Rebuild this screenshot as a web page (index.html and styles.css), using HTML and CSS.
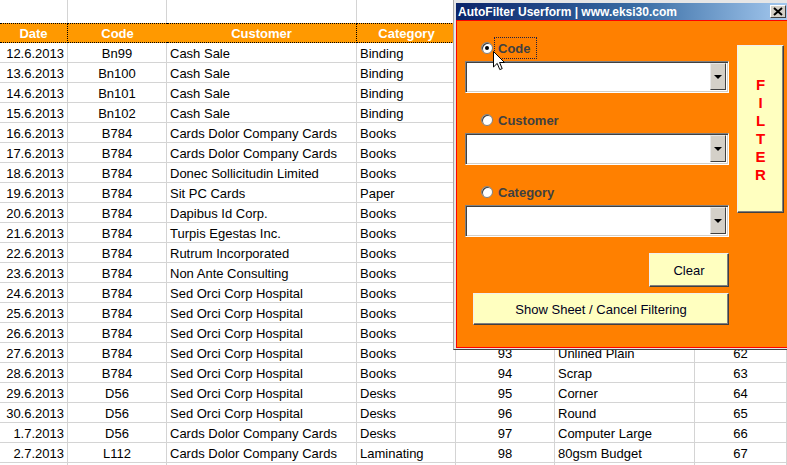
FILE: index.html
```html
<!DOCTYPE html>
<html>
<head>
<meta charset="utf-8">
<link rel="stylesheet" href="styles.css">
</head>
<body>
<div class="sheet">
  <div class="c top"></div><div class="c top"></div><div class="c top"></div><div class="c top"></div><div class="c top"></div><div class="c top"></div><div class="c top"></div>
  <div class="c h ants">Date</div><div class="c h">Code</div><div class="c h ants">Customer</div><div class="c h">Category</div><div class="c h"></div><div class="c h"></div><div class="c h"></div>

  <div class="c r">12.6.2013</div><div class="c m">Bn99</div><div class="c">Cash Sale</div><div class="c">Binding</div><div class="c"></div><div class="c"></div><div class="c"></div>
  <div class="c r">13.6.2013</div><div class="c m">Bn100</div><div class="c">Cash Sale</div><div class="c">Binding</div><div class="c"></div><div class="c"></div><div class="c"></div>
  <div class="c r">14.6.2013</div><div class="c m">Bn101</div><div class="c">Cash Sale</div><div class="c">Binding</div><div class="c"></div><div class="c"></div><div class="c"></div>
  <div class="c r">15.6.2013</div><div class="c m">Bn102</div><div class="c">Cash Sale</div><div class="c">Binding</div><div class="c"></div><div class="c"></div><div class="c"></div>
  <div class="c r">16.6.2013</div><div class="c m">B784</div><div class="c">Cards Dolor Company Cards</div><div class="c">Books</div><div class="c"></div><div class="c"></div><div class="c"></div>
  <div class="c r">17.6.2013</div><div class="c m">B784</div><div class="c">Cards Dolor Company Cards</div><div class="c">Books</div><div class="c"></div><div class="c"></div><div class="c"></div>
  <div class="c r">18.6.2013</div><div class="c m">B784</div><div class="c">Donec Sollicitudin Limited</div><div class="c">Books</div><div class="c"></div><div class="c"></div><div class="c"></div>
  <div class="c r">19.6.2013</div><div class="c m">B784</div><div class="c">Sit PC Cards</div><div class="c">Paper</div><div class="c"></div><div class="c"></div><div class="c"></div>
  <div class="c r">20.6.2013</div><div class="c m">B784</div><div class="c">Dapibus Id Corp.</div><div class="c">Books</div><div class="c"></div><div class="c"></div><div class="c"></div>
  <div class="c r">21.6.2013</div><div class="c m">B784</div><div class="c">Turpis Egestas Inc.</div><div class="c">Books</div><div class="c"></div><div class="c"></div><div class="c"></div>
  <div class="c r">22.6.2013</div><div class="c m">B784</div><div class="c">Rutrum Incorporated</div><div class="c">Books</div><div class="c"></div><div class="c"></div><div class="c"></div>
  <div class="c r">23.6.2013</div><div class="c m">B784</div><div class="c">Non Ante Consulting</div><div class="c">Books</div><div class="c"></div><div class="c"></div><div class="c"></div>
  <div class="c r">24.6.2013</div><div class="c m">B784</div><div class="c">Sed Orci Corp Hospital</div><div class="c">Books</div><div class="c"></div><div class="c"></div><div class="c"></div>
  <div class="c r">25.6.2013</div><div class="c m">B784</div><div class="c">Sed Orci Corp Hospital</div><div class="c">Books</div><div class="c"></div><div class="c"></div><div class="c"></div>
  <div class="c r">26.6.2013</div><div class="c m">B784</div><div class="c">Sed Orci Corp Hospital</div><div class="c">Books</div><div class="c"></div><div class="c"></div><div class="c"></div>
  <div class="c r">27.6.2013</div><div class="c m">B784</div><div class="c">Sed Orci Corp Hospital</div><div class="c">Books</div><div class="c m">93</div><div class="c">Unlined Plain</div><div class="c m">62</div>
  <div class="c r">28.6.2013</div><div class="c m">B784</div><div class="c">Sed Orci Corp Hospital</div><div class="c">Books</div><div class="c m">94</div><div class="c">Scrap</div><div class="c m">63</div>
  <div class="c r">29.6.2013</div><div class="c m">D56</div><div class="c">Sed Orci Corp Hospital</div><div class="c">Desks</div><div class="c m">95</div><div class="c">Corner</div><div class="c m">64</div>
  <div class="c r">30.6.2013</div><div class="c m">D56</div><div class="c">Sed Orci Corp Hospital</div><div class="c">Desks</div><div class="c m">96</div><div class="c">Round</div><div class="c m">65</div>
  <div class="c r">1.7.2013</div><div class="c m">D56</div><div class="c">Cards Dolor Company Cards</div><div class="c">Desks</div><div class="c m">97</div><div class="c">Computer Large</div><div class="c m">66</div>
  <div class="c r">2.7.2013</div><div class="c m">L112</div><div class="c">Cards Dolor Company Cards</div><div class="c">Laminating</div><div class="c m">98</div><div class="c">80gsm Budget</div><div class="c m">67</div>
  <div class="c"></div><div class="c"></div><div class="c"></div><div class="c"></div><div class="c"></div><div class="c"></div><div class="c"></div>
</div>

<div class="dialog">
  <div class="titlebar">
    <span class="title">AutoFilter Userform | www.eksi30.com</span>
    <span class="close"><svg width="10" height="9" viewBox="0 0 10 9"><path d="M1 1 L9 8 M9 1 L1 8" stroke="#000" stroke-width="2"/></svg></span>
  </div>
  <div class="body">
    <div class="left">
      <div class="group">
        <div class="radio-row"><span class="radio checked"></span><span class="lbl focus">Code</span></div>
        <div class="combo"><div class="field"></div><div class="drop"><span class="tri"></span></div></div>
      </div>
      <div class="group">
        <div class="radio-row"><span class="radio"></span><span class="lbl">Customer</span></div>
        <div class="combo"><div class="field"></div><div class="drop"><span class="tri"></span></div></div>
      </div>
      <div class="group">
        <div class="radio-row"><span class="radio"></span><span class="lbl">Category</span></div>
        <div class="combo"><div class="field"></div><div class="drop"><span class="tri"></span></div></div>
      </div>
      <div class="clear-row"><div class="btn clear">Clear</div></div>
      <div class="btn show">Show Sheet / Cancel Filtering</div>
    </div>
    <div class="btn filter">F<br>I<br>L<br>T<br>E<br>R</div>
  </div>
</div>

<svg class="cursor" width="13" height="20" viewBox="0 0 13 20"><path d="M0.5 0.5 L0.5 16 L4.2 12.4 L6.8 18.6 L9.2 17.6 L6.6 11.5 L11.5 11.5 Z" fill="#fff" stroke="#000" stroke-width="1"/></svg>
</body>
</html>
```
FILE: styles.css
```css
html, body {
  margin: 0;
  padding: 0;
  overflow: hidden;
  background: #fff;
}
body {
  width: 787px;
  height: 465px;
  position: relative;
}
.sheet {
  display: grid;
  grid-template-columns: 68px 99px 190px 99px 99px 140px 92px;
  grid-template-rows: 23px 20px;
  grid-auto-rows: 20px;
  font-family: "Liberation Sans", Arial, sans-serif;
  font-size: 13px;
  color: #000;
}
.c {
  box-sizing: border-box;
  border-right: 1px solid #d4d4d4;
  border-bottom: 1px solid #d4d4d4;
  padding: 0 3px;
  line-height: 21px;
  white-space: nowrap;
  overflow: hidden;
}
.c.top {
  border-bottom: none;
}
.c.h {
  background: #ff9900;
  color: #fff;
  font-weight: bold;
  text-align: center;
  border-top: 1px dotted #000;
  border-bottom: 1px dotted #000;
  border-right: none;
  line-height: 19px;
}
.c.h.ants {
  border-right: 1px dotted #000;
}
.r { text-align: right; }
.m { text-align: center; }

.dialog {
  position: absolute;
  left: 453px;
  top: 0;
  width: 340px;
  box-sizing: border-box;
  background: #e6e6e6;
  border-left: 1px solid #a8a8a8;
  border-bottom: 1px solid #404040;
  padding: 3px 3px 1px 2px;
  font-family: "Liberation Sans", Arial, sans-serif;
}
.titlebar {
  height: 17px;
  background: linear-gradient(to right, #0a246a 0%, #3a6ea5 55%, #a6caf0 100%);
  display: flex;
  align-items: center;
  justify-content: space-between;
  padding-left: 2px;
}
.title {
  color: #fff;
  font-weight: bold;
  font-size: 12px;
  white-space: nowrap;
}
.close {
  width: 16px;
  height: 13px;
  box-sizing: border-box;
  background: #d4d0c8;
  border: 1px solid;
  border-color: #fff #404040 #404040 #fff;
  margin-right: 4px;
  display: flex;
  align-items: center;
  justify-content: center;
}
.body {
  height: 328px;
  box-sizing: border-box;
  background: #ff8000;
  border: 1px solid #ff0000;
  display: flex;
  align-items: flex-start;
  padding: 16px 0 0 8px;
  gap: 8px;
}
.left {
  width: 264px;
  display: flex;
  flex-direction: column;
}
.group {
  display: flex;
  flex-direction: column;
  gap: 2px;
  margin-bottom: 16px;
}
.radio-row {
  height: 22px;
  display: flex;
  align-items: center;
  padding-left: 16px;
}
.radio {
  width: 12px;
  height: 12px;
  box-sizing: border-box;
  border-radius: 50%;
  background: #fff;
  border: 1px solid #808080;
  box-shadow: inset 1px 1px 0 #404040;
  position: relative;
}
.radio.checked::after {
  content: "";
  position: absolute;
  left: 3px;
  top: 3px;
  width: 4px;
  height: 4px;
  border-radius: 50%;
  background: #000;
}
.lbl {
  margin-left: 1px;
  padding: 0 5px 0 3px;
  height: 20px;
  line-height: 21px;
  font-size: 13px;
  font-weight: bold;
  color: #404040;
  border: 1px dotted transparent;
}
.lbl.focus {
  border-color: #202040;
}
.combo {
  height: 32px;
  box-sizing: border-box;
  background: #fff;
  border: 1px solid;
  border-color: #808080 #fff #fff #808080;
  box-shadow: inset 1px 1px 0 #404040, inset -1px -1px 0 #d4d0c8;
  display: flex;
  padding: 1px 2px 2px 2px;
}
.field {
  flex: 1;
}
.drop {
  width: 16px;
  box-sizing: border-box;
  background: #d4d0c8;
  border: 1px solid;
  border-color: #e8e8e8 #404040 #404040 #e8e8e8;
  display: flex;
  align-items: center;
  justify-content: center;
}
.tri {
  width: 0;
  height: 0;
  border-left: 4px solid transparent;
  border-right: 4px solid transparent;
  border-top: 4px solid #000;
}
.btn {
  box-sizing: border-box;
  background: #ffffc0;
  border: 1px solid;
  border-color: #f0f0f0 #404040 #404040 #f0f0f0;
  box-shadow: inset -1px -1px 0 #808080;
  color: #000020;
  font-size: 13px;
  display: flex;
  align-items: center;
  justify-content: center;
}
.clear-row {
  display: flex;
  justify-content: flex-end;
}
.clear {
  width: 80px;
  height: 34px;
}
.show {
  margin: 6px 0 0 8px;
  width: 256px;
  height: 32px;
}
.filter {
  margin-top: 8px;
  width: 47px;
  height: 168px;
  color: #ff0000;
  font-weight: bold;
  font-size: 15px;
  line-height: 18px;
  text-align: center;
  padding-top: 2px;
}
.cursor {
  position: absolute;
  left: 493px;
  top: 51px;
}
```
